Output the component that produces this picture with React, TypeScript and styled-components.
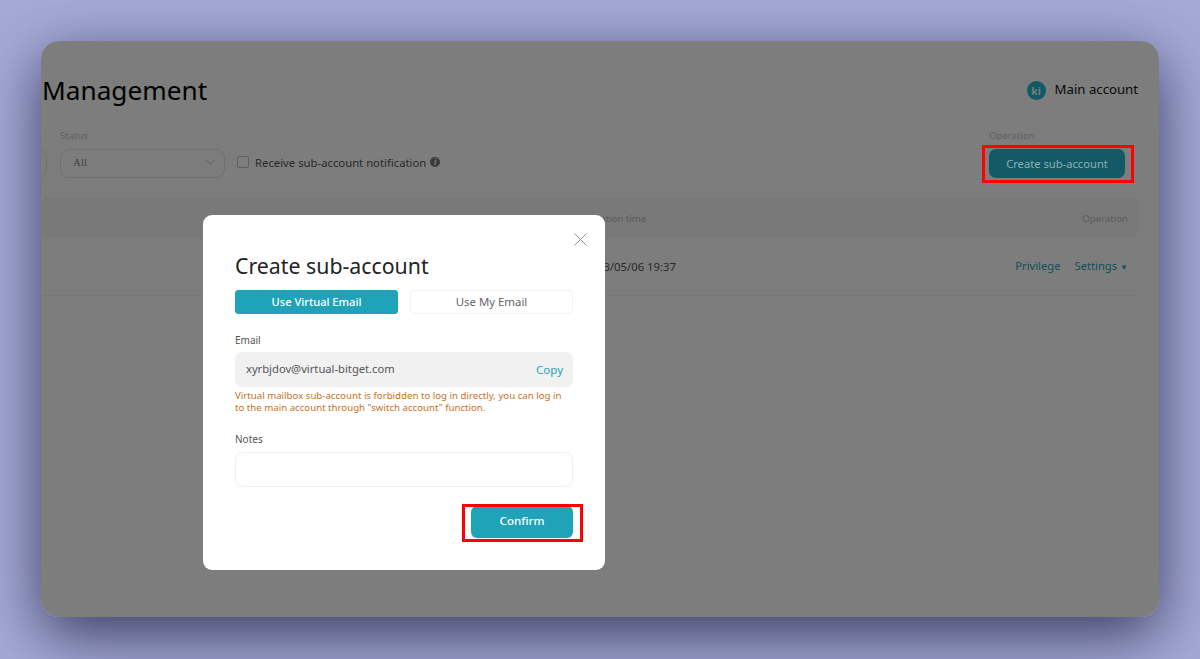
import React from 'react';
import styled, { createGlobalStyle } from 'styled-components';
import { ChevronDown, X } from 'lucide-react';

const Teal = '#1fa3b8';
const SANS = '"Noto Sans", "Open Sans", sans-serif';

const GlobalStyle = createGlobalStyle`
  html, body {
    margin: 0;
    padding: 0;
    height: 659px;
    overflow: hidden;
    background: #a5aad6;
    font-family: ${SANS};
  }
`;

const Backdrop = styled.div`
  width: 1200px;
  height: 659px;
  padding: 41px;
  box-sizing: border-box;
`;

const Window = styled.div`
  position: relative;
  height: 576px;
  border-radius: 18px;
  background: #fff;
  box-shadow: 0 18px 60px rgba(40, 44, 80, 0.85);
  overflow: hidden;
  isolation: isolate;
`;

const Mask = styled.div`
  position: absolute;
  inset: 0;
  z-index: 1;
  background: rgba(0, 0, 0, 0.51);
`;

const Page = styled.div`
  padding: 30px 21px 0 1px;
`;

const Header = styled.div`
  display: flex;
  justify-content: space-between;
  align-items: center;
  height: 38px;
`;

const Title = styled.div`
  font-size: 26.2px;
  line-height: 38px;
  color: #000;
`;

const Account = styled.div`
  display: flex;
  align-items: center;
  gap: 9px;
  font-size: 13.2px;
  color: #111;
`;

const AccountName = styled.span`
  margin-top: -2px;
`;

const Avatar = styled.div`
  width: 19px;
  height: 19px;
  border-radius: 50%;
  background: #26b8cc;
  color: #fff;
  font-size: 11px;
  font-weight: 600;
  display: flex;
  align-items: center;
  justify-content: center;
`;

const Filters = styled.div`
  display: flex;
  align-items: flex-end;
  margin-top: 20px;
  height: 49px;
  margin-left: -40px;
`;

const Field = styled.div`
  display: flex;
  flex-direction: column;
  gap: 6px;
  margin-right: 13px;
`;

const FieldLabel = styled.div`
  font-size: 9.6px;
  line-height: 14px;
  color: #c4c4c4;
`;

const Select = styled.div<{ $width: number }>`
  width: ${(p) => p.$width}px;
  height: 29px;
  box-sizing: border-box;
  border: 1px solid #e4e4e4;
  border-radius: 9px;
  padding: 0 6px 3px 12px;
  display: flex;
  align-items: center;
  justify-content: space-between;
  font-family: 'Liberation Serif', serif;
  font-size: 11px;
  color: #888;
`;

const Notice = styled.label`
  display: flex;
  align-items: center;
  height: 29px;
  box-sizing: border-box;
  padding-bottom: 3px;
  margin-left: -1px;
  font-size: 11.3px;
  color: #555;
`;

const Checkbox = styled.span`
  width: 10px;
  height: 10px;
  border: 1px solid #c4c4c4;
  border-radius: 2px;
  margin-right: 6px;
`;

const InfoDot = styled.span`
  width: 10px;
  height: 10px;
  margin-left: 4px;
  border-radius: 50%;
  background: #777;
  color: #fff;
  font-size: 8px;
  line-height: 10px;
  font-style: italic;
  font-weight: 700;
  text-align: center;
`;

const Spacer = styled.div`
  flex: 1;
`;

const CreateButton = styled.div`
  position: relative;
  z-index: 2;
  width: 136px;
  height: 29px;
  border-radius: 7px;
  background: #145a66;
  color: #8ab0b6;
  font-size: 11.2px;
  display: flex;
  align-items: center;
  justify-content: center;

  &::after {
    content: '';
    position: absolute;
    top: -4px;
    left: -7px;
    right: -9px;
    bottom: -5px;
    border: 3px solid #f00;
  }
`;

const TableHead = styled.div`
  display: flex;
  align-items: center;
  justify-content: space-between;
  height: 41px;
  box-sizing: border-box;
  margin-top: 19px;
  margin-left: -1px;
  padding: 1px 10px 0 544px;
  background: #f6f6f6;
  border-radius: 6px;
  font-size: 9.6px;
  color: #bbb;
`;

const TableRow = styled.div`
  display: flex;
  align-items: center;
  height: 58px;
  margin-left: -1px;
  padding: 0 10px 0 543px;
  box-sizing: border-box;
  border-bottom: 1px solid #f3f3f3;
  font-size: 11.3px;
  color: #555;
`;

const RowActions = styled.div`
  margin-left: auto;
  display: flex;
  gap: 14px;
  padding-bottom: 2px;
  font-size: 11.2px;
  color: ${Teal};
`;

const Caret = styled.span`
  font-size: 8px;
  margin-left: 3px;
`;

const Modal = styled.div`
  position: absolute;
  z-index: 2;
  left: 162px;
  top: 174px;
  width: 402px;
  height: 355px;
  box-sizing: border-box;
  padding: 32px 32px 0;
  border-radius: 9px;
  background: #fff;
`;

const CloseButton = styled.div`
  position: absolute;
  top: 13px;
  right: 13px;
  color: #888;
  display: flex;
`;

const ModalTitle = styled.div`
  font-size: 21.3px;
  line-height: 38px;
  color: #1f2329;
`;

const Tabs = styled.div`
  display: grid;
  grid-template-columns: 163px 163px;
  justify-content: space-between;
  margin-top: 5px;
`;

const Tab = styled.div<{ $active?: boolean }>`
  height: 24px;
  box-sizing: border-box;
  padding-bottom: 2px;
  border-radius: 3px;
  border: 1px solid ${(p) => (p.$active ? Teal : '#f2f2f2')};
  background: ${(p) => (p.$active ? Teal : '#fff')};
  color: ${(p) => (p.$active ? '#fff' : '#666')};
  font-size: ${(p) => (p.$active ? 11.1 : 11.4)}px;
  font-weight: ${(p) => (p.$active ? 500 : 400)};
  display: flex;
  align-items: center;
  justify-content: center;
`;

const ModalLabel = styled.div`
  font-size: 10px;
  line-height: 14px;
  color: #555;
`;

const EmailLabel = styled(ModalLabel)`
  margin-top: 19px;
`;

const NotesLabel = styled(ModalLabel)`
  margin-top: 18px;
`;

const InputBox = styled.div<{ $filled?: boolean }>`
  height: 35px;
  margin-top: 5px;
  box-sizing: border-box;
  border-radius: 7px;
  border: 1px solid ${(p) => (p.$filled ? '#f1f1f1' : '#f0f0f0')};
  background: ${(p) => (p.$filled ? '#f1f1f1' : '#fff')};
  padding: 0 9px 2px 10px;
  display: flex;
  align-items: center;
  justify-content: space-between;
  font-size: 11.2px;
  color: #555;
`;

const NotesBox = styled(InputBox)`
  margin-top: 6px;
`;

const CopyLink = styled.span`
  color: ${Teal};
  font-size: 11.5px;
  padding-top: 2px;
`;

const Warning = styled.div`
  max-width: 331px;
  margin-top: 3px;
  font-size: 9.66px;
  line-height: 12px;
  color: #c7721e;
`;

const Footer = styled.div`
  display: flex;
  justify-content: flex-end;
  margin-top: 19px;
`;

const ConfirmButton = styled.div`
  position: relative;
  width: 102px;
  height: 32px;
  box-sizing: border-box;
  padding-bottom: 3px;
  border-radius: 6px;
  background: ${Teal};
  color: #fff;
  font-size: 11.6px;
  font-weight: 500;
  display: flex;
  align-items: center;
  justify-content: center;

  &::after {
    content: '';
    position: absolute;
    top: -2px;
    left: -9px;
    right: -10px;
    bottom: -4px;
    border: 3px solid #f00;
  }
`;

const App: React.FC = () => (
  <Backdrop>
    <GlobalStyle />
    <Window>
      <Page>
        <Header>
          <Title>Management</Title>
          <Account>
            <Avatar>ki</Avatar>
            <AccountName>Main account</AccountName>
          </Account>
        </Header>
        <Filters>
          <Field>
            <Select $width={45} />
          </Field>
          <Field>
            <FieldLabel>Status</FieldLabel>
            <Select $width={165}>
              All
              <ChevronDown size={15} strokeWidth={1} color="#999" />
            </Select>
          </Field>
          <Notice>
            <Checkbox />
            Receive sub-account notification
            <InfoDot>i</InfoDot>
          </Notice>
          <Spacer />
          <Field>
            <FieldLabel>Operation</FieldLabel>
            <CreateButton>Create sub-account</CreateButton>
          </Field>
        </Filters>
        <TableHead>
          <span>Creation time</span>
          <span>Operation</span>
        </TableHead>
        <TableRow>
          <span>2023/05/06 19:37</span>
          <RowActions>
            <span>Privilege</span>
            <span>
              Settings<Caret>▼</Caret>
            </span>
          </RowActions>
        </TableRow>
      </Page>
      <Mask />
      <Modal>
        <CloseButton>
          <X size={23} strokeWidth={1} />
        </CloseButton>
        <ModalTitle>Create sub-account</ModalTitle>
        <Tabs>
          <Tab $active>Use Virtual Email</Tab>
          <Tab>Use My Email</Tab>
        </Tabs>
        <EmailLabel>Email</EmailLabel>
        <InputBox $filled>
          xyrbjdov@virtual-bitget.com
          <CopyLink>Copy</CopyLink>
        </InputBox>
        <Warning>
          Virtual mailbox sub-account is forbidden to log in directly, you can log in
          to the main account through "switch account" function.
        </Warning>
        <NotesLabel>Notes</NotesLabel>
        <NotesBox />
        <Footer>
          <ConfirmButton>Confirm</ConfirmButton>
        </Footer>
      </Modal>
    </Window>
  </Backdrop>
);

export default App;
